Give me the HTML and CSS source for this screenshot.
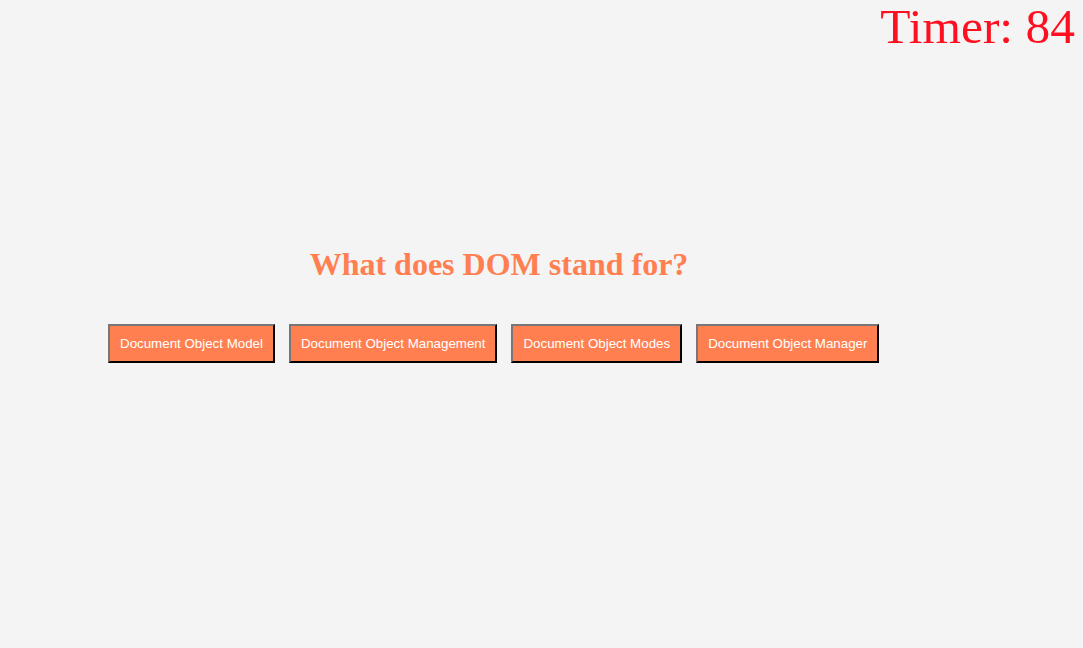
FILE: index.html
```html
<!DOCTYPE html>
<html>
<head>
<meta charset="utf-8">
<link rel="stylesheet" href="styles.css">
</head>
<body>
<div class="timer">Timer: 84</div>
<main class="quiz">
  <h1 class="question">What does DOM stand for?</h1>
  <div class="choices">
    <button class="choice">Document Object Model</button>
    <button class="choice">Document Object Management</button>
    <button class="choice">Document Object Modes</button>
    <button class="choice">Document Object Manager</button>
  </div>
</main>
</body>
</html>
```
FILE: styles.css
```css
html, body {
  margin: 0;
  padding: 0;
}
body {
  background: #f4f4f4;
  font-family: "Liberation Serif", "Times New Roman", serif;
  min-height: 648px;
}
.timer {
  display: flex;
  justify-content: flex-end;
  padding-right: 8px;
  height: 54px;
  font-size: 49.5px;
  line-height: 54px;
  color: #ff1020;
}
.quiz {
  margin-left: 108px;
  width: 782px;
  padding-top: 186px;
}
.question {
  margin: 0;
  text-align: center;
  color: #ff7f50;
  font-size: 32px;
  line-height: 48px;
  font-weight: bold;
}
.choices {
  display: flex;
  gap: 14px;
  margin-top: 36px;
}
.choice {
  background: #ff7f50;
  color: #fff;
  font-family: "Liberation Sans", Arial, sans-serif;
  font-size: 13.33px;
  height: 39px;
  padding: 0 10px;
  border: 2px outset #777;
  border-color: #777 #222 #222 #777;
}
```
